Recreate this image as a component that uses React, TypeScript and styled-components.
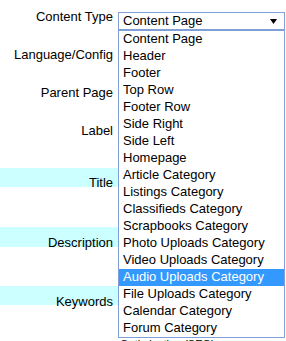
import React from "react";
import styled, { createGlobalStyle } from "styled-components";

const GlobalStyle = createGlobalStyle`
  html, body {
    margin: 0;
    padding: 0;
    background: #fff;
  }
  body {
    font-family: "Liberation Sans", Arial, sans-serif;
    font-size: 13px;
    color: #000;
    overflow: hidden;
  }
`;

const Page = styled.div`
  position: relative;
  width: 286px;
  height: 341px;
  overflow: hidden;
`;

const Form = styled.div`
  display: flex;
  flex-direction: column;
`;

const Row = styled.div<{ $h: number }>`
  display: grid;
  grid-template-columns: 118px 1fr;
  height: ${(p) => p.$h}px;
`;

const Label = styled.div<{ $top: number; $band?: number }>`
  box-sizing: border-box;
  padding: ${(p) => p.$top}px 5px 0 0;
  text-align: right;
  line-height: 16px;
  white-space: nowrap;
  background: ${(p) =>
    p.$band ? `linear-gradient(#ccffff, #ccffff) no-repeat 0 0 / 100% ${p.$band}px` : "none"};
`;

const Field = styled.div<{ $top?: number }>`
  padding-top: ${(p) => p.$top ?? 0}px;
`;

const SelectWrap = styled.div`
  position: relative;
  width: 167px;
`;

const SelectBox = styled.div`
  box-sizing: border-box;
  height: 18px;
  border: 1px solid #7f9fd6;
  display: flex;
  align-items: center;
  justify-content: space-between;
  padding: 0 7px 0 4px;
  line-height: 16px;
  background: #fff;
`;

const Arrow = styled.svg`
  display: block;
`;

const DropList = styled.ul`
  position: absolute;
  top: 100%;
  left: 0;
  width: 100%;
  box-sizing: border-box;
  margin: 0;
  padding: 0;
  list-style: none;
  border: 1px solid #7f9fd6;
  background: #fff;
  z-index: 2;
`;

const Option = styled.li<{ $active?: boolean }>`
  height: 17px;
  line-height: 15px;
  padding: 0 0 2px 4px;
  box-sizing: border-box;
  white-space: nowrap;
  background: ${(p) => (p.$active ? "#3399ff" : "transparent")};
  color: ${(p) => (p.$active ? "#fff" : "#000")};
`;

const SectionTitle = styled.div`
  font-size: 11px;
  line-height: 13px;
  padding: 3px 0 0 2px;
  white-space: nowrap;
`;

const options = [
  "Content Page",
  "Header",
  "Footer",
  "Top Row",
  "Footer Row",
  "Side Right",
  "Side Left",
  "Homepage",
  "Article Category",
  "Listings Category",
  "Classifieds Category",
  "Scrapbooks Category",
  "Photo Uploads Category",
  "Video Uploads Category",
  "Audio Uploads Category",
  "File Uploads Category",
  "Calendar Category",
  "Forum Category",
];

const App: React.FC = () => {
  return (
    <Page>
      <GlobalStyle />
      <Form>
        <Row $h={40}>
          <Label $top={9}>Content Type</Label>
          <Field $top={12}>
            <SelectWrap>
              <SelectBox>
                <span>Content Page</span>
                <Arrow width="7" height="5" viewBox="0 0 7 5">
                  <polygon points="0,0 7,0 3.5,5" fill="#000" />
                </Arrow>
              </SelectBox>
              <DropList>
                {options.map((o) => (
                  <Option key={o} $active={o === "Audio Uploads Category"}>
                    {o}
                  </Option>
                ))}
              </DropList>
            </SelectWrap>
          </Field>
        </Row>
        <Row $h={38}>
          <Label $top={7}>Language/Config</Label>
          <Field />
        </Row>
        <Row $h={38}>
          <Label $top={7}>Parent Page</Label>
          <Field />
        </Row>
        <Row $h={52}>
          <Label $top={7}>Label</Label>
          <Field />
        </Row>
        <Row $h={59}>
          <Label $top={7} $band={19}>Title</Label>
          <Field />
        </Row>
        <Row $h={59}>
          <Label $top={8} $band={20}>Description</Label>
          <Field />
        </Row>
        <Row $h={49}>
          <Label $top={8} $band={19}>Keywords</Label>
          <Field />
        </Row>
        <Row $h={20}>
          <Label $top={0} />
          <SectionTitle>Optimization (SEO)</SectionTitle>
        </Row>
      </Form>
    </Page>
  );
};

export default App;
